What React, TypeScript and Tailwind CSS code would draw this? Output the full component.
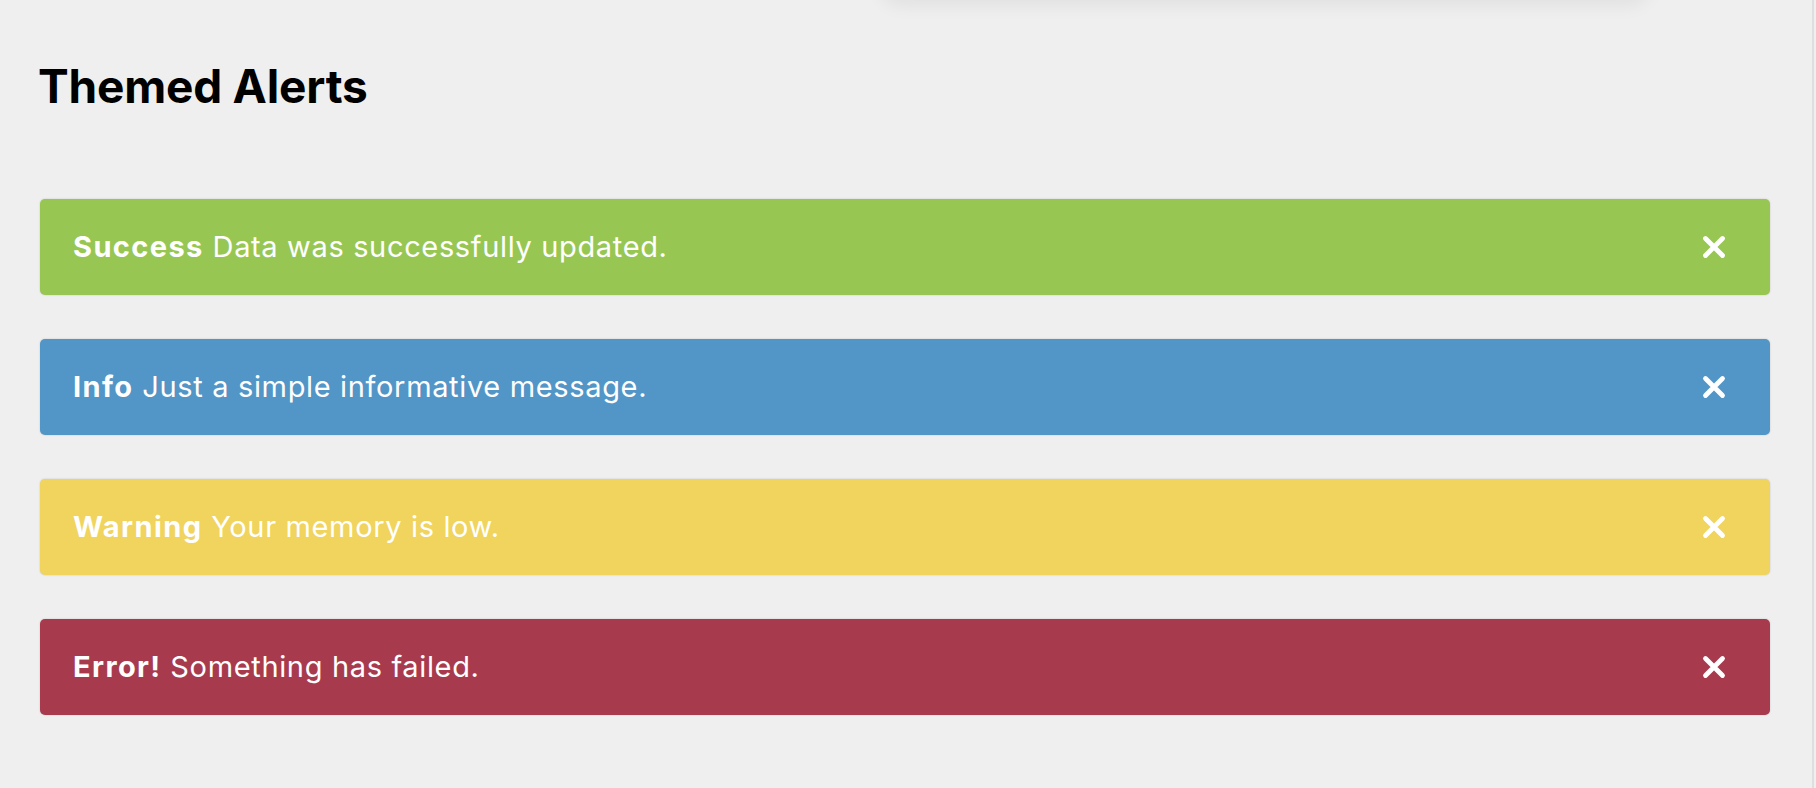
import React from "react";

const alerts = [
  { title: "Success", msg: "Data was successfully updated.", bg: "bg-[#97c752]" },
  { title: "Info", msg: "Just a simple informative message.", bg: "bg-[#5295c7]" },
  { title: "Warning", msg: "Your memory is low.", bg: "bg-[#f0d45e]" },
  { title: "Error!", msg: "Something has failed.", bg: "bg-[#a83a4d]" },
];

function CloseIcon() {
  return (
    <svg width="24" height="24" viewBox="0 0 24 24" fill="none" aria-hidden="true">
      <path d="M3.5 3.5 L20.5 20.5 M20.5 3.5 L3.5 20.5" stroke="white" strokeWidth="4.8" strokeLinecap="round" />
    </svg>
  );
}

export default function App() {
  return (
    <div
      className="relative flex min-h-[788px] w-full overflow-hidden bg-[#efefef]"
      style={{ fontFamily: "Inter, 'Noto Sans', sans-serif" }}
    >
      <div className="pointer-events-none absolute left-[880px] top-[-30px] h-[30px] w-[770px] rounded-b-[20px] shadow-[0_6px_18px_rgba(0,0,0,0.06)]" />
      <div className="flex-1 border-r-2 border-[#dedede] pl-[40px] pr-[42px] pt-[58px]">
        <h1 className="-ml-[2px] text-[46px] font-bold leading-[56px] tracking-[-0.2px] text-black">Themed Alerts</h1>
        <div className="mt-[85px] flex flex-col gap-[44px]">
          {alerts.map((a) => (
            <div
              key={a.title}
              className={`flex items-center justify-between rounded-[5px] ${a.bg} py-[30px] pl-[33px] pr-[44px] shadow-[0_0_2px_rgba(0,0,0,0.18)]`}
            >
              <p className="text-[29px] leading-[36px] tracking-[0.65px] text-white">
                <span className="font-bold tracking-[1.4px]">{a.title}</span> {a.msg}
              </p>
              <button className="flex h-[36px] w-[24px] items-center justify-center">
                <CloseIcon />
              </button>
            </div>
          ))}
        </div>
      </div>
      <div className="w-[2px] bg-[#efefef]" />
    </div>
  );
}
